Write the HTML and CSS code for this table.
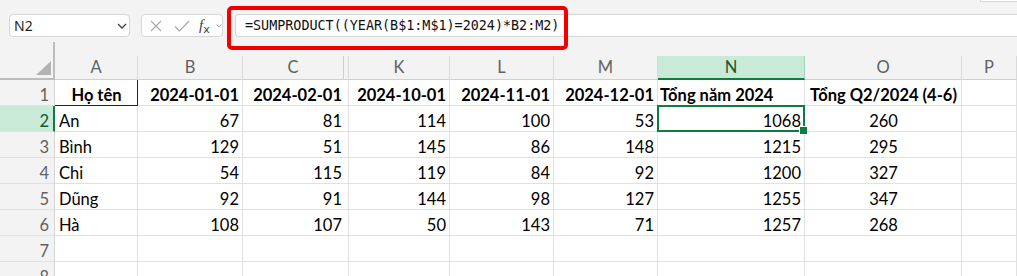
FILE: index.html
```html
<!DOCTYPE html>
<html lang="vi">
<head>
<meta charset="utf-8">
<title>Excel SUMPRODUCT</title>
<link rel="stylesheet" href="styles.css">
</head>
<body>
<div class="app">
  <div class="topbar">
    <div class="namebox">
      <span class="name">N2</span>
      <svg class="chev" width="10" height="6" viewBox="0 0 10 6"><path d="M1 1 L5 5 L9 1" fill="none" stroke="#424242" stroke-width="1.3"/></svg>
    </div>
    <div class="fnbox">
      <svg class="ico-x" width="12" height="12" viewBox="0 0 12 12"><path d="M1 1 L11 11 M11 1 L1 11" fill="none" stroke="#a8a8a8" stroke-width="1.2"/></svg>
      <svg class="ico-ok" width="16" height="12" viewBox="0 0 16 12"><path d="M1 6.5 L5.5 11 L15 1" fill="none" stroke="#a8a8a8" stroke-width="1.2"/></svg>
      <span class="fx"><i>f</i><span class="fxx">x</span></span>
      <svg class="ico-dd" width="6" height="4" viewBox="0 0 6 4"><path d="M0.5 0.5 L3 3 L5.5 0.5" fill="none" stroke="#a8a8a8" stroke-width="1"/></svg>
    </div>
    <div class="formula">=SUMPRODUCT((YEAR(B$1:M$1)=2024)*B2:M2)</div>
    <div class="highlight"></div>
    <div class="topright"></div>
  </div>

  <div class="sheet">
    <div class="corner"></div>
    <div class="ch">A</div>
    <div class="ch">B</div>
    <div class="ch hid">C</div>
    <div class="ch">K</div>
    <div class="ch">L</div>
    <div class="ch">M</div>
    <div class="ch sel">N</div>
    <div class="ch">O</div>
    <div class="ch">P</div>

    <div class="rh">1</div>
    <div class="c ctr b a1">Họ tên</div>
    <div class="c r b">2024-01-01</div>
    <div class="c r b cc">2024-02-01</div>
    <div class="c r b">2024-10-01</div>
    <div class="c r b">2024-11-01</div>
    <div class="c r b">2024-12-01</div>
    <div class="c b n1">Tổng năm 2024</div>
    <div class="c ctr b">Tổng Q2/2024 (4-6)</div>
    <div class="c"></div>

    <div class="rh rsel">2</div>
    <div class="c">An</div>
    <div class="c r">67</div>
    <div class="c r cc">81</div>
    <div class="c r">114</div>
    <div class="c r">100</div>
    <div class="c r">53</div>
    <div class="c r active">1068</div>
    <div class="c ctr">260</div>
    <div class="c"></div>

    <div class="rh">3</div>
    <div class="c">Bình</div>
    <div class="c r">129</div>
    <div class="c r cc">51</div>
    <div class="c r">145</div>
    <div class="c r">86</div>
    <div class="c r">148</div>
    <div class="c r">1215</div>
    <div class="c ctr">295</div>
    <div class="c"></div>

    <div class="rh">4</div>
    <div class="c">Chi</div>
    <div class="c r">54</div>
    <div class="c r cc">115</div>
    <div class="c r">119</div>
    <div class="c r">84</div>
    <div class="c r">92</div>
    <div class="c r">1200</div>
    <div class="c ctr">327</div>
    <div class="c"></div>

    <div class="rh">5</div>
    <div class="c">Dũng</div>
    <div class="c r">92</div>
    <div class="c r cc">91</div>
    <div class="c r">144</div>
    <div class="c r">98</div>
    <div class="c r">127</div>
    <div class="c r">1255</div>
    <div class="c ctr">347</div>
    <div class="c"></div>

    <div class="rh">6</div>
    <div class="c">Hà</div>
    <div class="c r">108</div>
    <div class="c r cc">107</div>
    <div class="c r">50</div>
    <div class="c r">143</div>
    <div class="c r">71</div>
    <div class="c r">1257</div>
    <div class="c ctr">268</div>
    <div class="c"></div>

    <div class="rh">7</div>
    <div class="c"></div><div class="c"></div><div class="c"></div><div class="c"></div>
    <div class="c"></div><div class="c"></div><div class="c"></div><div class="c"></div><div class="c"></div>

    <div class="rh">8</div>
    <div class="c"></div><div class="c"></div><div class="c"></div><div class="c"></div>
    <div class="c"></div><div class="c"></div><div class="c"></div><div class="c"></div><div class="c"></div>
  </div>
</div>
</body>
</html>
```

FILE: styles.css
```css
* { box-sizing: border-box; }
html, body { margin: 0; padding: 0; background: #fff; }
.app {
  width: 1017px;
  height: 276px;
  overflow: hidden;
  position: relative;
  font-family: "Lato", "Open Sans", sans-serif;
}

/* ---------- top bar ---------- */
.topbar {
  position: relative;
  height: 56px;
  background: #f3f3f3;
  display: flex;
  align-items: flex-start;
  padding: 14px 0 0 9px;
}
.namebox {
  width: 121px;
  height: 23px;
  background: #fff;
  border: 1px solid #d6d6d6;
  border-radius: 4px;
  display: flex;
  align-items: center;
  justify-content: space-between;
  padding: 0 2px 0 4px;
}
.name {
  font-family: "Noto Sans", "Open Sans", sans-serif;
  font-size: 14px;
  color: #242424;
}
.fnbox {
  margin-left: 11px;
  width: 82px;
  height: 23px;
  background: #fff;
  border: 1px solid #d6d6d6;
  border-radius: 4px;
  display: flex;
  align-items: center;
  padding-left: 8px;
}
.ico-x { margin-top: 1px; }
.ico-ok { margin-left: 12px; margin-top: 1px; }
.fx {
  margin-left: 9px;
  font-family: "Liberation Serif", serif;
  font-size: 15px;
  color: #404040;
  line-height: 1;
  display: inline-flex;
  align-items: flex-end;
}
.fx i { font-style: italic; }
.fxx { font-size: 11px; margin-bottom: -2px; font-family: "DejaVu Sans", sans-serif; }
.ico-dd { margin-left: 6px; }
.formula {
  margin-left: 12px;
  flex: 1;
  height: 23px;
  background: #fff;
  border: 1px solid #d6d6d6;
  border-right: none;
  border-radius: 4px 0 0 4px;
  padding-left: 9px;
  font-family: "DejaVu Sans Mono", "Liberation Mono", monospace;
  font-size: 13.4px;
  line-height: 21px;
  color: #111;
  white-space: nowrap;
}
.highlight {
  position: absolute;
  left: 227px;
  top: 6px;
  width: 341px;
  height: 44px;
  border: 4px solid #f20000;
  border-radius: 5px;
}
.topright {
  position: absolute;
  left: 980px;
  top: -20px;
  width: 50px;
  height: 22px;
  background: #fff;
  border: 1px solid #d6d6d6;
}

/* ---------- sheet ---------- */
.sheet {
  display: grid;
  grid-template-columns: 55px 83px 105px 106px 101px 104px 104px 147px 157px 1fr;
  grid-template-rows: 24px repeat(8, 26px);
  font-size: 16.5px;
}
.corner {
  position: relative;
  background: #f3f3f3;
  border-right: 2px solid #bdbdbd;
  border-bottom: 2px solid #bdbdbd;
}
.corner::before {
  content: "";
  position: absolute;
  right: -2px;
  top: -14px;
  width: 2px;
  height: 14px;
  background: #bdbdbd;
}
.corner::after {
  content: "";
  position: absolute;
  right: 2px;
  bottom: 3px;
  width: 15px;
  height: 14px;
  background: #b4b4b4;
  clip-path: polygon(100% 0, 100% 100%, 0 100%);
}
.ch {
  position: relative;
  background: #f3f3f3;
  color: #616161;
  text-align: center;
  line-height: 23px;
  border-right: 1px solid #dadada;
  border-bottom: 1px solid #cfcfcf;
}
.ch.hid { padding-right: 5px; }
.ch.hid::after {
  content: "";
  position: absolute;
  right: 4px;
  top: 0;
  bottom: 0;
  width: 1px;
  background: #cfcfcf;
}
.ch.sel {
  background: #caead8;
  color: #0e5c2f;
  border-right: 1px solid #9fd5b7;
  border-bottom: 2px solid #107c41;
}
.rh {
  background: #f3f3f3;
  color: #616161;
  text-align: right;
  padding: 3px 5px 0 0;
  line-height: 24px;
  border-right: 1px solid #d4d4d4;
  border-bottom: 1px solid #e1e1e1;
}
.rh.rsel {
  background: #caead8;
  color: #0e5c2f;
  border-right: 2px solid #107c41;
  padding-right: 4px;
}
.c {
  position: relative;
  background: #fff;
  color: #000;
  white-space: nowrap;
  padding: 3px 3px 0 4px;
  line-height: 24px;
  border-right: 1px solid #e1e1e1;
  border-bottom: 1px solid #e1e1e1;
}
.c.r { text-align: right; }
.c.ctr { text-align: center; }
.c.b { font-weight: 700; }
.c.cc { padding-right: 6px; }
.c.n1 { padding-left: 2px; }
.c.a1 {
  border-right-color: #222;
  border-bottom-color: #222;
}
.c.active::before {
  content: "";
  position: absolute;
  left: -1px;
  top: -1px;
  right: -1px;
  bottom: -1px;
  border: 2px solid #107c41;
}
.c.active::after {
  content: "";
  position: absolute;
  right: -4px;
  bottom: -4px;
  width: 7px;
  height: 7px;
  background: #107c41;
  border: 1px solid #fff;
  z-index: 2;
}
```
